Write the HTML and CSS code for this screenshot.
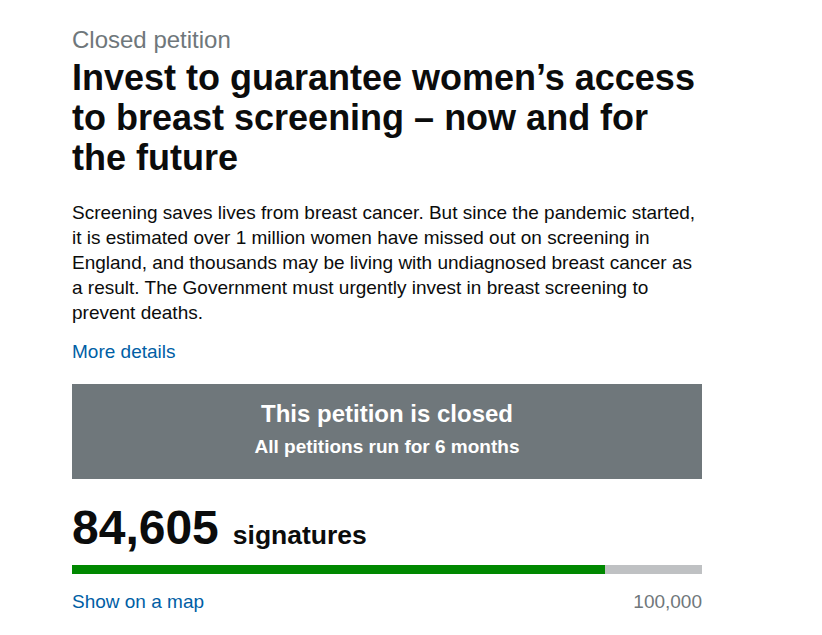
FILE: index.html
```html
<!DOCTYPE html>
<html lang="en">
<head>
<meta charset="utf-8">
<title>Invest to guarantee women’s access to breast screening</title>
<link rel="stylesheet" href="styles.css">
</head>
<body>
<main class="page">
  <p class="kicker">Closed petition</p>
  <h1 class="title">Invest to guarantee women’s access to breast screening – now and for the future</h1>
  <p class="lede">Screening saves lives from breast cancer. But since the pandemic started, it is estimated over 1 million women have missed out on screening in England, and thousands may be living with undiagnosed breast cancer as a result. The Government must urgently invest in breast screening to prevent deaths.</p>
  <p class="more"><a href="#" class="link">More details</a></p>
  <section class="closed-box">
    <h2 class="closed-title">This petition is closed</h2>
    <p class="closed-sub">All petitions run for 6 months</p>
  </section>
  <section class="signatures">
    <p class="count"><span class="count-num">84,605</span><span class="count-label">signatures</span></p>
    <div class="bar"><div class="bar-fill" style="width: 84.605%"></div></div>
    <div class="bar-foot">
      <a href="#" class="link">Show on a map</a>
      <span class="target">100,000</span>
    </div>
  </section>
</main>
</body>
</html>
```

FILE: styles.css
```css
html, body {
  margin: 0;
  padding: 0;
  background: #ffffff;
}
body {
  font-family: "Liberation Sans", Arial, sans-serif;
  color: #0b0c0c;
}
.page {
  width: 630px;
  margin-left: 72px;
  padding-top: 25px;
}
.kicker {
  margin: 0;
  font-size: 24px;
  line-height: 30px;
  color: #6f777b;
}
.title {
  margin: 3px 0 0;
  font-size: 36px;
  line-height: 40px;
  font-weight: 700;
}
.lede {
  margin: 22px 0 0;
  font-size: 19px;
  line-height: 25px;
}
.more {
  margin: 14px 0 0;
  font-size: 19px;
  line-height: 25px;
}
.link {
  color: #005ea5;
  text-decoration: none;
}
.closed-box {
  margin-top: 20px;
  background: #6f777b;
  color: #ffffff;
  text-align: center;
  padding: 15px 20px 20px;
}
.closed-title {
  margin: 0;
  font-size: 24px;
  line-height: 30px;
  font-weight: 700;
}
.closed-sub {
  margin: 5px 0 0;
  font-size: 19px;
  line-height: 25px;
  font-weight: 700;
}
.signatures {
  margin-top: 19px;
}
.count {
  margin: 0;
  display: flex;
  align-items: baseline;
  gap: 14px;
  font-weight: 700;
}
.count-num {
  font-size: 48px;
  line-height: 60px;
}
.count-label {
  font-size: 26.5px;
  line-height: 30px;
}
.bar {
  margin-top: 7px;
  height: 9px;
  background: #bfc1c3;
}
.bar-fill {
  height: 100%;
  background: #008800;
}
.bar-foot {
  margin-top: 15px;
  display: flex;
  justify-content: space-between;
  font-size: 19px;
  line-height: 25px;
}
.target {
  color: #6f777b;
}
```
